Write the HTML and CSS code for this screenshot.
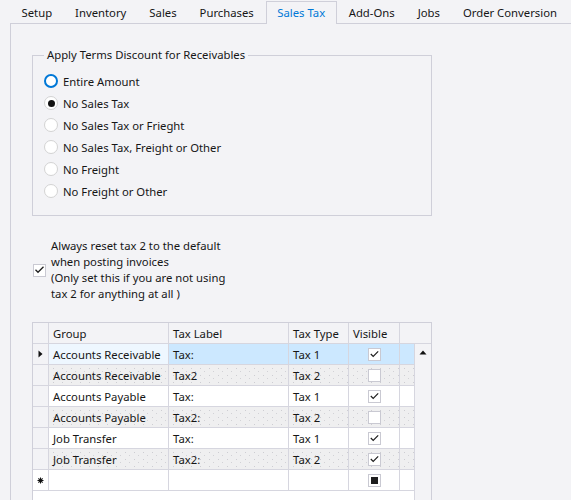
FILE: index.html
```html
<!DOCTYPE html>
<html lang="en">
<head>
<meta charset="utf-8">
<title>Sales Tax</title>
<link rel="stylesheet" href="styles.css">
</head>
<body>
<div class="tabs">
  <div class="tab">Setup</div>
  <div class="tab">Inventory</div>
  <div class="tab">Sales</div>
  <div class="tab">Purchases</div>
  <div class="tab active">Sales Tax</div>
  <div class="tab">Add-Ons</div>
  <div class="tab">Jobs</div>
  <div class="tab lasttab">Order Conversion</div>
</div>
<div class="panel">
  <fieldset class="group">
    <legend>Apply Terms Discount for Receivables</legend>
    <div class="radio-row"><span class="radio focus"></span>Entire Amount</div>
    <div class="radio-row"><span class="radio checked"></span>No Sales Tax</div>
    <div class="radio-row"><span class="radio"></span>No Sales Tax or Frieght</div>
    <div class="radio-row"><span class="radio"></span>No Sales Tax, Freight or Other</div>
    <div class="radio-row"><span class="radio"></span>No Freight</div>
    <div class="radio-row"><span class="radio"></span>No Freight or Other</div>
  </fieldset>

  <div class="check-row">
    <span class="check"><svg width="11" height="11" viewBox="0 0 11 11"><polyline points="1.5,4.8 4,7.3 9.5,1.8" fill="none" stroke="#1e1e1e" stroke-width="1.3"/></svg></span>
    <div class="check-label">Always reset tax 2 to the default<br>when posting invoices<br>(Only set this if you are not using<br>tax 2 for anything at all )</div>
  </div>

  <div class="grid">
    <div class="hcell rh"></div>
    <div class="hcell">Group</div>
    <div class="hcell">Tax Label</div>
    <div class="hcell">Tax Type</div>
    <div class="hcell">Visible</div>
    <div class="hcell last"></div>

    <div class="scroll"><svg width="8" height="5" viewBox="0 0 8 5"><polygon points="0.5,4.5 4,0.5 7.5,4.5" fill="#111"/></svg></div>

    <div class="rh"><svg width="5" height="8" viewBox="0 0 5 8"><polygon points="0.5,0.5 4.5,4 0.5,7.5" fill="#111"/></svg></div>
    <div class="cell cur">Accounts Receivable</div>
    <div class="cell sel">Tax:</div>
    <div class="cell sel">Tax 1</div>
    <div class="cell sel center"><span class="box"><svg width="11" height="11" viewBox="0 0 11 11"><polyline points="1.8,5 4.2,7.4 9.2,2.4" fill="none" stroke="#1e1e1e" stroke-width="1.2"/></svg></span></div>
    <div class="cell sel extra"></div>

    <div class="rh"></div>
    <div class="cell alt">Accounts Receivable</div>
    <div class="cell alt">Tax2</div>
    <div class="cell alt">Tax 2</div>
    <div class="cell alt center"><span class="box"></span></div>
    <div class="cell alt extra"></div>

    <div class="rh"></div>
    <div class="cell">Accounts Payable</div>
    <div class="cell">Tax:</div>
    <div class="cell">Tax 1</div>
    <div class="cell center"><span class="box"><svg width="11" height="11" viewBox="0 0 11 11"><polyline points="1.8,5 4.2,7.4 9.2,2.4" fill="none" stroke="#1e1e1e" stroke-width="1.2"/></svg></span></div>
    <div class="cell extra"></div>

    <div class="rh"></div>
    <div class="cell alt">Accounts Payable</div>
    <div class="cell alt">Tax2:</div>
    <div class="cell alt">Tax 2</div>
    <div class="cell alt center"><span class="box"></span></div>
    <div class="cell alt extra"></div>

    <div class="rh"></div>
    <div class="cell">Job Transfer</div>
    <div class="cell">Tax:</div>
    <div class="cell">Tax 1</div>
    <div class="cell center"><span class="box"><svg width="11" height="11" viewBox="0 0 11 11"><polyline points="1.8,5 4.2,7.4 9.2,2.4" fill="none" stroke="#1e1e1e" stroke-width="1.2"/></svg></span></div>
    <div class="cell extra"></div>

    <div class="rh"></div>
    <div class="cell alt">Job Transfer</div>
    <div class="cell alt">Tax2:</div>
    <div class="cell alt">Tax 2</div>
    <div class="cell alt center"><span class="box"><svg width="11" height="11" viewBox="0 0 11 11"><polyline points="1.8,5 4.2,7.4 9.2,2.4" fill="none" stroke="#1e1e1e" stroke-width="1.2"/></svg></span></div>
    <div class="cell alt extra"></div>

    <div class="rh newrow"><svg width="7" height="7" viewBox="0 0 7 7"><g stroke="#111" stroke-width="1.1"><line x1="3.5" y1="0.5" x2="3.5" y2="6.5"/><line x1="0.5" y1="3.5" x2="6.5" y2="3.5"/><line x1="1.4" y1="1.4" x2="5.6" y2="5.6"/><line x1="5.6" y1="1.4" x2="1.4" y2="5.6"/></g></svg></div>
    <div class="cell"></div>
    <div class="cell"></div>
    <div class="cell"></div>
    <div class="cell center"><span class="box"><span class="ind"></span></span></div>
    <div class="cell extra"></div>
  </div>
</div>
</body>
</html>
```
FILE: styles.css
```css
html, body {
  margin: 0;
  padding: 0;
  background: #f3f3f6;
  overflow: hidden;
}
body {
  width: 571px;
  height: 500px;
  font-family: "Noto Sans", "Open Sans", sans-serif;
  font-size: 11.3px;
  color: #161616;
}

/* Tabs */
.tabs {
  display: flex;
  align-items: flex-end;
  height: 23px;
  padding-left: 10px;
  position: relative;
  z-index: 1;
  white-space: nowrap;
}
.tab {
  padding: 0 11.5px;
  height: 20px;
  line-height: 20px;
}
.tab.lasttab {
  padding-right: 0;
}
.tab.active {
  height: 22px;
  line-height: 22px;
  padding: 0 11px 0 10px;
  margin: 0 0 -1px 1px;
  border: 1px solid #cfcfd9;
  border-bottom: none;
  background: #f3f3f6;
  color: #0078d7;
}

/* Panel */
.panel {
  margin-left: 10px;
  width: 561px;
  height: 477px;
  border-left: 1px solid #cfcfd9;
  border-top: 1px solid #cfcfd9;
  padding-left: 21px;
  box-sizing: border-box;
  overflow: hidden;
}

/* Group box */
.group {
  margin: 23px 0 0 0;
  width: 400px;
  box-sizing: border-box;
  border: 1px solid #cfcfd9;
  padding: 7px 0 13px 11px;
  min-width: 0;
}
.group legend {
  padding: 0 3px;
  line-height: 16px;
}
.radio-row {
  display: flex;
  align-items: center;
  height: 22px;
}
.radio {
  width: 14px;
  height: 14px;
  box-sizing: border-box;
  border-radius: 50%;
  border: 1px solid #d3d3d3;
  background: #fff;
  margin-right: 5px;
  display: flex;
  align-items: center;
  justify-content: center;
}
.radio.focus {
  border: 2px solid #0078d7;
}
.radio.checked::after {
  content: "";
  width: 7px;
  height: 7px;
  border-radius: 50%;
  background: #111;
}

/* Checkbox */
.check-row {
  display: flex;
  align-items: center;
  margin-top: 22px;
}
.check {
  width: 13px;
  height: 13px;
  box-sizing: border-box;
  border: 1px solid #c9c9d2;
  background: #fff;
  margin-left: 1px;
  margin-right: 5px;
  display: flex;
  align-items: center;
  justify-content: center;
}
.check-label {
  line-height: 16px;
}

/* Grid */
.grid {
  margin-top: 20px;
  width: 400px;
  height: 178px;
  box-sizing: border-box;
  border: 1px solid #cfcfd9;
  border-bottom: none;
  background: #fff;
  display: grid;
  grid-template-columns: 16px 120px 120px 60px 51px 14px 17px;
  grid-template-rows: repeat(8, 21px) 1fr;
  overflow: hidden;
}
.hcell, .cell, .rh {
  box-sizing: border-box;
  border-right: 1px solid #d6d6df;
  border-bottom: 1px solid #d6d6df;
  display: flex;
  align-items: center;
  padding-left: 4px;
  white-space: nowrap;
  overflow: hidden;
}
.hcell {
  background: #f3f3f6;
}
.hcell.last {
  grid-column: 6 / 8;
  border-right: none;
}
.rh {
  background: #f3f3f6;
  padding-left: 0;
  justify-content: center;
}
.rh.newrow {
  background: #fff;
}
.cell {
  background: #fff;
}
.cell.cur {
  background: #eef7ff;
}
.cell.sel {
  background: #cce8ff;
}
.cell.alt {
  background-color: #efeff0;
  background-image:
    radial-gradient(circle, #cdcdd2 0.6px, transparent 0.9px),
    radial-gradient(circle, #d2d2d6 0.6px, transparent 0.9px);
  background-size: 9px 7px, 9px 7px;
  background-position: 0 0, 4px 3px;
}
.cell.center {
  justify-content: center;
  padding-left: 0;
}
.cell.extra {
  border-right: none;
}
.scroll {
  grid-column: 7;
  grid-row: 2 / 10;
  background: #f3f3f6;
  border-left: 1px solid #d6d6df;
  display: flex;
  justify-content: center;
  align-items: flex-start;
  padding-top: 6px;
  box-sizing: border-box;
}
.box {
  width: 13px;
  height: 13px;
  box-sizing: border-box;
  border: 1px solid #c9c9d2;
  background: #fff;
  display: flex;
  align-items: center;
  justify-content: center;
}
.ind {
  width: 7px;
  height: 7px;
  background: #1e1e1e;
}
```
